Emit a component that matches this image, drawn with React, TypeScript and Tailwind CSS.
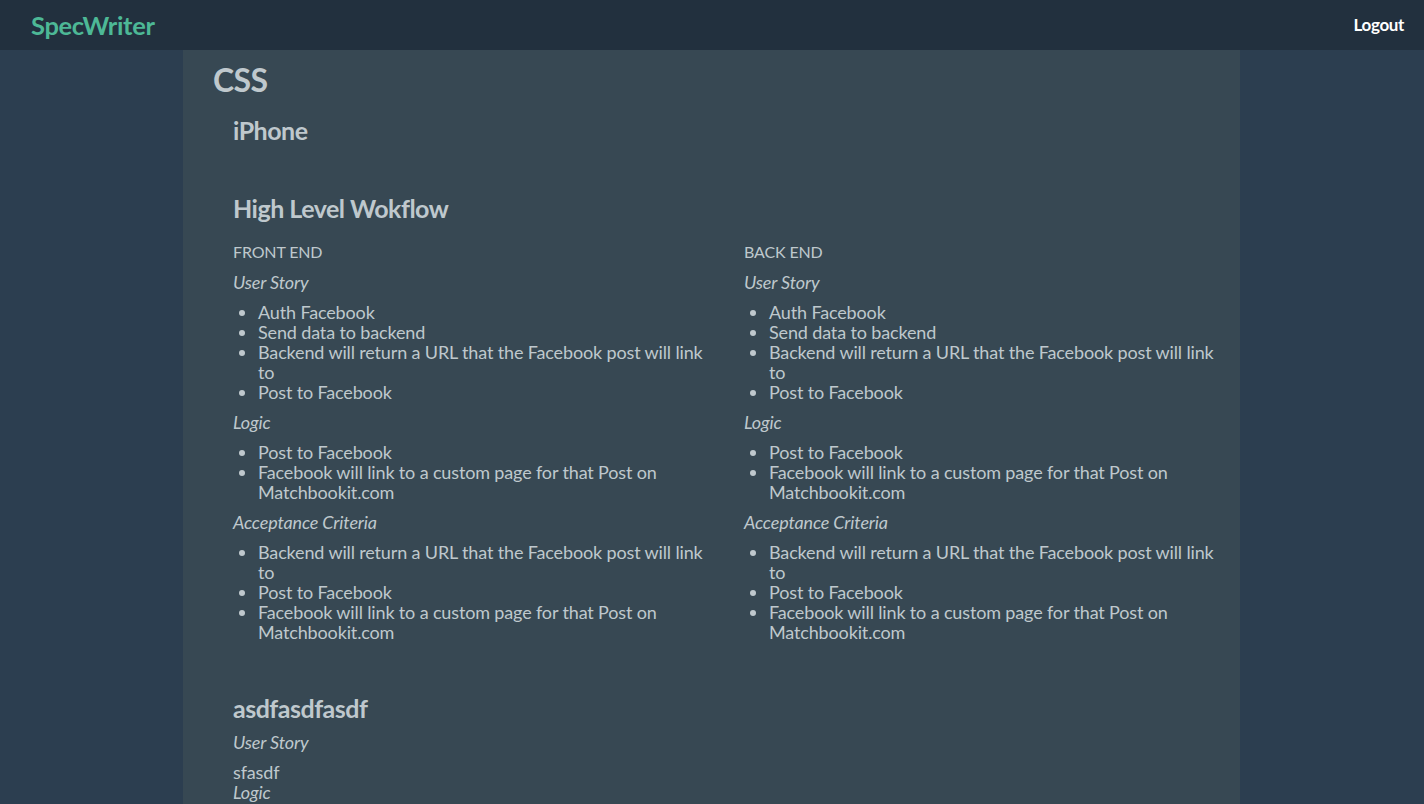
import type { ReactNode } from 'react'

const userStory = [
  'Auth Facebook',
  'Send data to backend',
  'Backend will return a URL that the Facebook post will link to',
  'Post to Facebook',
]
const logic = ['Post to Facebook', 'Facebook will link to a custom page for that Post on Matchbookit.com']
const acceptance = [
  'Backend will return a URL that the Facebook post will link to',
  'Post to Facebook',
  'Facebook will link to a custom page for that Post on Matchbookit.com',
]

function Label({ children }: { children: ReactNode }) {
  return <p className="mb-[10px] italic">{children}</p>
}

function Bullets({ items }: { items: string[] }) {
  return (
    <ul className="mb-[10px] list-disc pl-[25px]">
      {items.map((t) => (
        <li key={t}>{t}</li>
      ))}
    </ul>
  )
}

function SideColumn({ title }: { title: string }) {
  return (
    <div>
      <h3 className="mb-[10px] text-[16px] uppercase">{title}</h3>
      <Label>User Story</Label>
      <Bullets items={userStory} />
      <Label>Logic</Label>
      <Bullets items={logic} />
      <Label>Acceptance Criteria</Label>
      <Bullets items={acceptance} />
    </div>
  )
}

export default function App() {
  return (
    <div
      className="min-h-screen bg-[#2c3e50] text-[18px] leading-5 tracking-[-0.008em] text-[#bfc8cd]"
      style={{ fontFamily: 'Lato, "Open Sans", sans-serif' }}
    >
      <nav className="flex h-[50px] items-center justify-between bg-[#22303e] pr-[20px] pl-[31px] tracking-[-0.02em]">
        <span className="text-[25.5px] font-bold text-[#4db896]">SpecWriter</span>
        <button type="button" className="text-[17px] font-bold text-white">
          Logout
        </button>
      </nav>
      <main className="ml-[183px] h-[754px] w-[1057px] overflow-hidden bg-[#374853] px-[30px] pt-[12px]">
        <h1 className="text-[32px] leading-9 font-bold tracking-[-0.02em]">CSS</h1>
        <div className="pl-[20px]">
          <section className="pt-[18px] pb-[50px]">
            <h2 className="text-[25px] leading-7 font-bold tracking-[-0.02em]">iPhone</h2>
          </section>
          <section>
            <h2 className="mb-[20px] text-[25px] leading-7 font-bold tracking-[-0.02em]">High Level Wokflow</h2>
            <div className="grid grid-cols-[481px_481px] gap-x-[30px]">
              <SideColumn title="Front End" />
              <SideColumn title="Back End" />
            </div>
          </section>
          <section className="pt-[42px]">
            <h2 className="mb-[10px] text-[25px] leading-7 font-bold tracking-[-0.02em]">asdfasdfasdf</h2>
            <Label>User Story</Label>
            <p>sfasdf</p>
            <p className="italic">Logic</p>
          </section>
        </div>
      </main>
    </div>
  )
}
